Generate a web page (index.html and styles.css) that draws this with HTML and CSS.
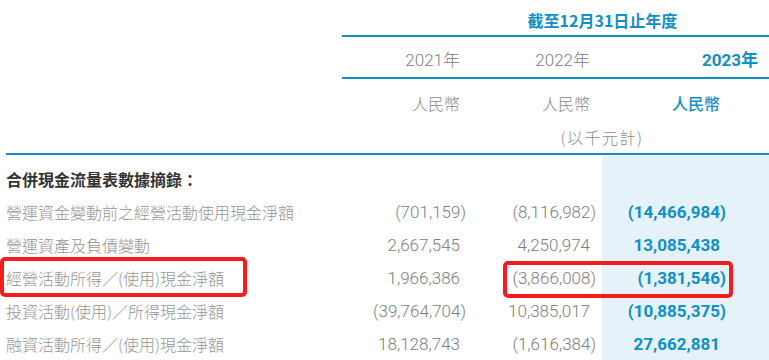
FILE: index.html
```html
<!DOCTYPE html>
<html lang="zh-Hant">
<head>
<meta charset="utf-8">
<title>合併現金流量表數據摘錄</title>
<link rel="stylesheet" href="styles.css">
</head>
<body>
<div class="page">
  <div class="table">
    <div class="period">截至12月31日止年度</div>

    <div class="year y2021">2021年</div>
    <div class="year">2022年</div>
    <div class="year current">2023年</div>

    <div class="ccy c2021">人民幣</div>
    <div class="ccy">人民幣</div>
    <div class="ccy current">人民幣</div>

    <div class="unit">(以千元計)</div>

    <div class="section">合併現金流量表數據摘錄：</div>
    <div class="cell"></div>
    <div class="cell"></div>
    <div class="cell current first"></div>

    <div class="label">營運資金變動前之經營活動使用現金淨額</div>
    <div class="num">(701,159<span class="cp">)</span></div>
    <div class="num">(8,116,982<span class="cp">)</span></div>
    <div class="num current">(14,466,984<span class="cp">)</span></div>

    <div class="label">營運資產及負債變動</div>
    <div class="num">2,667,545</div>
    <div class="num">4,250,974</div>
    <div class="num current">13,085,438</div>

    <div class="label">經營活動所得／(使用)現金淨額</div>
    <div class="num">1,966,386</div>
    <div class="num">(3,866,008<span class="cp">)</span></div>
    <div class="num current">(1,381,546<span class="cp">)</span></div>

    <div class="label">投資活動(使用)／所得現金淨額</div>
    <div class="num">(39,764,704<span class="cp">)</span></div>
    <div class="num">10,385,017</div>
    <div class="num current">(10,885,375<span class="cp">)</span></div>

    <div class="label">融資活動所得／(使用)現金淨額</div>
    <div class="num">18,128,743</div>
    <div class="num">(1,616,384<span class="cp">)</span></div>
    <div class="num current">27,662,881</div>
  </div>

  <div class="mark mark-label"></div>
  <div class="mark mark-values"></div>
</div>
</body>
</html>
```

FILE: styles.css
```css
* { box-sizing: border-box; }

html, body {
  margin: 0;
  padding: 0;
  background: #ffffff;
}

body {
  width: 769px;
  height: 360px;
  overflow: hidden;
  font-family: "Noto Sans CJK TC", sans-serif;
}

.page {
  position: relative;
  width: 769px;
  height: 360px;
}

.table {
  margin-left: 6px;
  display: grid;
  grid-template-columns: 336px 130px 130px 167px;
}

.period {
  grid-column: 2 / 5;
  height: 37px;
  padding-top: 8px;
  padding-left: 94px;
  text-align: center;
  font-size: 16px;
  line-height: 24px;
  font-weight: 700;
  color: #1190c3;
  border-bottom: 2px solid #1190c3;
}

.year {
  height: 42px;
  padding-top: 11px;
  padding-right: 12px;
  text-align: right;
  font-family: "Roboto", "Noto Sans CJK TC", sans-serif;
  font-size: 17px;
  font-weight: 300;
  line-height: 24px;
  color: #808080;
  border-bottom: 2px solid #1190c3;
}

.y2021,
.c2021 {
  grid-column: 2;
}

.year.current {
  padding-right: 11px;
  font-weight: 700;
  color: #1190c3;
}

.ccy {
  padding-top: 12px;
  padding-right: 12px;
  text-align: right;
  font-size: 16px;
  font-weight: 300;
  line-height: 24px;
  color: #8a8a8a;
}

.ccy.current {
  padding-right: 49px;
  font-weight: 500;
  color: #1190c3;
}

.unit {
  grid-column: 1 / 5;
  height: 40px;
  padding-top: 10px;
  padding-left: 429px;
  text-align: center;
  font-size: 16px;
  font-weight: 300;
  line-height: 24px;
  letter-spacing: 1.5px;
  color: #8a8a8a;
  border-bottom: 2px solid #1190c3;
}

.section {
  grid-column: 1;
  height: 41px;
  padding-top: 8px;
  font-size: 16px;
  font-weight: 700;
  line-height: 33px;
  color: #333333;
}

.cell.first {
  margin-top: 1px;
}

.label {
  height: 33px;
  font-size: 16px;
  font-weight: 300;
  line-height: 33px;
  color: #959595;
  white-space: nowrap;
}

.num {
  height: 33px;
  padding-right: 12px;
  text-align: right;
  font-family: "Roboto", sans-serif;
  font-size: 17px;
  font-weight: 300;
  line-height: 33px;
  color: #808080;
  white-space: nowrap;
}

.num.current {
  padding-right: 49px;
  font-weight: 700;
  color: #1190c3;
}

.current.cell,
.num.current {
  background: #e5f2f9;
}

.cp {
  display: inline-block;
  margin-right: -6px;
}

.mark {
  position: absolute;
  border: 4px solid #f41c1c;
  border-radius: 5px;
}

.mark-label {
  left: 0;
  top: 257px;
  width: 247px;
  height: 40px;
}

.mark-values {
  left: 503px;
  top: 261px;
  width: 230px;
  height: 37px;
}
```
